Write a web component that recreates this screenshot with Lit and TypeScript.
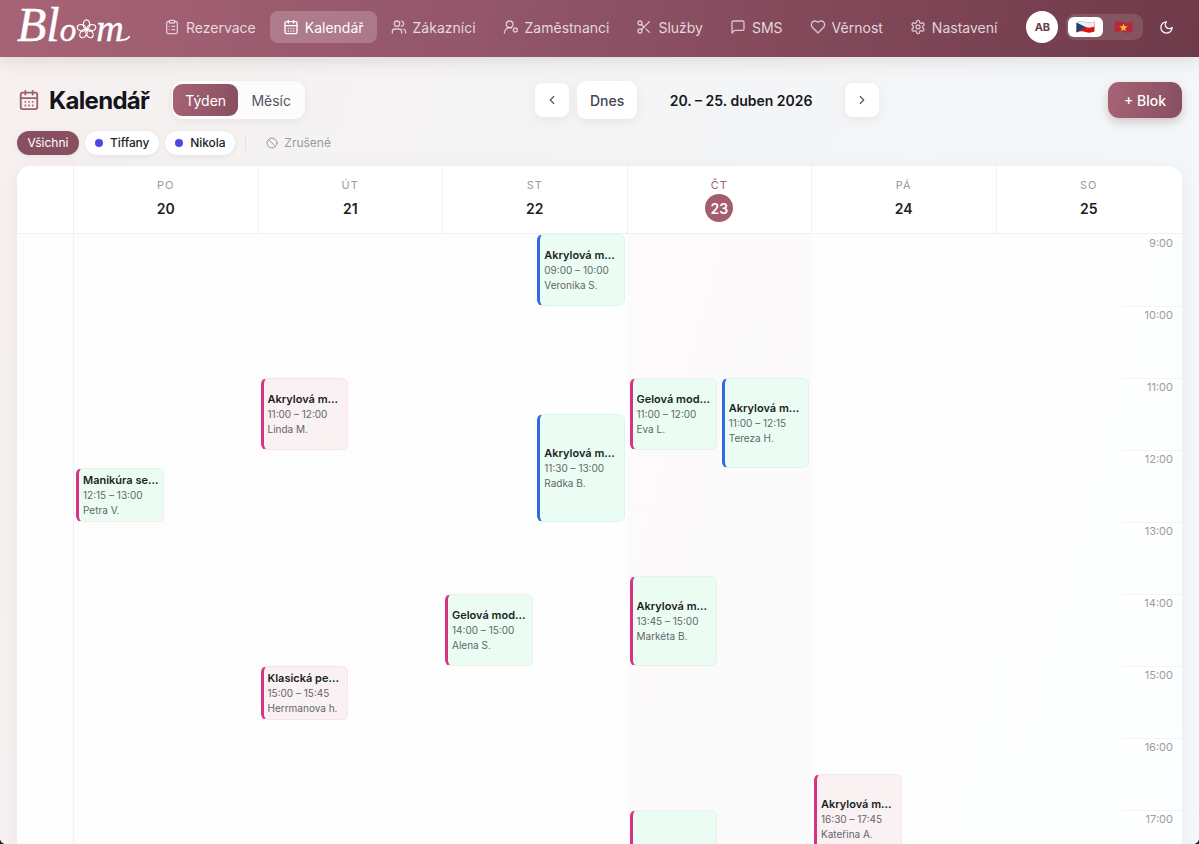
import { LitElement, html, css, svg } from "lit";
import { customElement } from "lit/decorators.js";

const I = {
  clipboard: svg`<rect x="8" y="2" width="8" height="4" rx="1"/><path d="M16 4h2a2 2 0 0 1 2 2v14a2 2 0 0 1-2 2H6a2 2 0 0 1-2-2V6a2 2 0 0 1 2-2h2"/><path d="M12 11h4M12 16h4M8 11h.01M8 16h.01"/>`,
  calendar: svg`<path d="M8 2v4M16 2v4"/><rect x="3" y="4" width="18" height="18" rx="2"/><path d="M3 10h18M8 14h.01M12 14h.01M16 14h.01M8 18h.01M12 18h.01M16 18h.01"/>`,
  users: svg`<path d="M16 21v-2a4 4 0 0 0-4-4H6a4 4 0 0 0-4 4v2"/><circle cx="9" cy="7" r="4"/><path d="M22 21v-2a4 4 0 0 0-3-3.87"/><path d="M16 3.13a4 4 0 0 1 0 7.75"/>`,
  staff: svg`<circle cx="10" cy="8" r="5"/><path d="M2 21a8 8 0 0 1 10.4-7.6"/><circle cx="18.5" cy="16.5" r="3"/>`,
  scissors: svg`<circle cx="6" cy="6" r="3"/><path d="M8.12 8.12 12 12"/><path d="M20 4 8.12 15.88"/><circle cx="6" cy="18" r="3"/><path d="M14.8 14.8 20 20"/>`,
  message: svg`<path d="M21 15a2 2 0 0 1-2 2H7l-4 4V5a2 2 0 0 1 2-2h14a2 2 0 0 1 2 2z"/>`,
  heart: svg`<path d="M19 14c1.49-1.46 3-3.21 3-5.5A5.5 5.5 0 0 0 16.5 3c-1.76 0-3 .5-4.5 2-1.5-1.5-2.74-2-4.5-2A5.5 5.5 0 0 0 2 8.5c0 2.3 1.5 4.05 3 5.5l7 7Z"/>`,
  settings: svg`<path d="M12.22 2h-.44a2 2 0 0 0-2 2v.18a2 2 0 0 1-1 1.73l-.43.25a2 2 0 0 1-2 0l-.15-.08a2 2 0 0 0-2.73.73l-.22.38a2 2 0 0 0 .73 2.73l.15.1a2 2 0 0 1 1 1.72v.51a2 2 0 0 1-1 1.74l-.15.09a2 2 0 0 0-.73 2.73l.22.38a2 2 0 0 0 2.73.73l.15-.08a2 2 0 0 1 2 0l.43.25a2 2 0 0 1 1 1.73V20a2 2 0 0 0 2 2h.44a2 2 0 0 0 2-2v-.18a2 2 0 0 1 1-1.73l.43-.25a2 2 0 0 1 2 0l.15.08a2 2 0 0 0 2.73-.73l.22-.39a2 2 0 0 0-.73-2.73l-.15-.08a2 2 0 0 1-1-1.74v-.5a2 2 0 0 1 1-1.74l.15-.09a2 2 0 0 0 .73-2.73l-.22-.38a2 2 0 0 0-2.73-.73l-.15.08a2 2 0 0 1-2 0l-.43-.25a2 2 0 0 1-1-1.73V4a2 2 0 0 0-2-2z"/><circle cx="12" cy="12" r="3"/>`,
  moon: svg`<path d="M12 3a6 6 0 0 0 9 9 9 9 0 1 1-9-9Z"/>`,
  left: svg`<path d="m15 18-6-6 6-6"/>`,
  right: svg`<path d="m9 18 6-6-6-6"/>`,
  ban: svg`<circle cx="12" cy="12" r="10"/><path d="m4.9 4.9 14.2 14.2"/>`,
};

const icon = (p: unknown, cls = "") =>
  html`<svg class="ic ${cls}" viewBox="0 0 24 24" fill="none" stroke="currentColor" stroke-width="2" stroke-linecap="round" stroke-linejoin="round">${p}</svg>`;

const NAV: [string, unknown, boolean?][] = [
  ["Rezervace", I.clipboard],
  ["Kalendář", I.calendar, true],
  ["Zákazníci", I.users],
  ["Zaměstnanci", I.staff],
  ["Služby", I.scissors],
  ["SMS", I.message],
  ["Věrnost", I.heart],
  ["Nastavení", I.settings],
];

const DAYS: [string, number][] = [["PO", 20], ["ÚT", 21], ["ST", 22], ["ČT", 23], ["PÁ", 24], ["SO", 25]];

type Ev = { day: number; lane: number; start: number; end: number; title: string; time: string; who: string; accent: "pink" | "blue"; tint: "green" | "rose" };
const m = (h: number, min = 0) => h * 60 + min;
const EVENTS: Ev[] = [
  { day: 0, lane: 0, start: m(12, 15), end: m(13), title: "Manikúra se lakováním", time: "12:15 – 13:00", who: "Petra V.", accent: "pink", tint: "green" },
  { day: 1, lane: 0, start: m(11), end: m(12), title: "Akrylová modeláž", time: "11:00 – 12:00", who: "Linda M.", accent: "pink", tint: "rose" },
  { day: 1, lane: 0, start: m(15), end: m(15, 45), title: "Klasická pedikúra", time: "15:00 – 15:45", who: "Herrmanova h.", accent: "pink", tint: "rose" },
  { day: 2, lane: 1, start: m(9), end: m(10), title: "Akrylová modeláž", time: "09:00 – 10:00", who: "Veronika S.", accent: "blue", tint: "green" },
  { day: 2, lane: 1, start: m(11, 30), end: m(13), title: "Akrylová modeláž", time: "11:30 – 13:00", who: "Radka B.", accent: "blue", tint: "green" },
  { day: 2, lane: 0, start: m(14), end: m(15), title: "Gelová modeláž", time: "14:00 – 15:00", who: "Alena S.", accent: "pink", tint: "green" },
  { day: 3, lane: 0, start: m(11), end: m(12), title: "Gelová modeláž", time: "11:00 – 12:00", who: "Eva L.", accent: "pink", tint: "green" },
  { day: 3, lane: 1, start: m(11), end: m(12, 15), title: "Akrylová modeláž", time: "11:00 – 12:15", who: "Tereza H.", accent: "blue", tint: "green" },
  { day: 3, lane: 0, start: m(13, 45), end: m(15), title: "Akrylová modeláž", time: "13:45 – 15:00", who: "Markéta B.", accent: "pink", tint: "green" },
  { day: 3, lane: 0, start: m(17), end: m(18, 30), title: "Akrylová modeláž", time: "17:00 – 18:30", who: "Jana K.", accent: "pink", tint: "green" },
  { day: 4, lane: 0, start: m(16, 30), end: m(17, 45), title: "Akrylová modeláž", time: "16:30 – 17:45", who: "Kateřina A.", accent: "pink", tint: "rose" },
];
const HOURS = [9, 10, 11, 12, 13, 14, 15, 16, 17, 18];

@customElement("app-root")
export class AppRoot extends LitElement {
  static styles = css`
    :host { display: block; height: 844px; overflow: hidden; position: relative; font-family: Inter, "Liberation Sans", sans-serif; color: #18181f;
      background: linear-gradient(105deg, #f6f0ef 0%, #f4f4f5 45%, #f3f8fa 100%); }
    * { box-sizing: border-box; }
    .ic { width: 16px; height: 16px; display: block; flex: none; }
    header { height: 57px; display: flex; align-items: center; padding: 0 0 3px 17px; position: relative; z-index: 2;
      background: linear-gradient(100deg, #a76376 0%, #93566a 40%, #6f3a49 100%); box-shadow: 0 4px 16px rgba(70,30,40,.12); }
    .logo { width: 128px; height: 44px; margin-bottom: 4px; flex: none; display: flex; align-items: baseline; color: #fff; font-family: "Liberation Serif", serif; font-style: italic; line-height: 44px; white-space: nowrap; -webkit-text-stroke: .4px #fff; }
    .logo .bl { font-size: 48px; }
    .logo .o { font-size: 33px; }
    .logo .flower { width: 21px; height: 21px; align-self: center; margin: 8px 0 0 0; flex: none; }
    .logo .mm { font-size: 38px; margin-left: -1px; }
    .logo .tail { width: 9px; height: 8px; flex: none; margin-left: -3px; }
    nav { display: flex; align-items: center; gap: 1px; margin-left: 6px; }
    .item { display: flex; align-items: center; gap: 6px; height: 32px; padding: 0 13px; border-radius: 8px; font-size: 14px; color: rgba(255,255,255,.78); white-space: nowrap; }
    .item .ic { color: rgba(255,255,255,.68); }
    .item.on { color: #fff; background: rgba(255,255,255,.2); }
    .item.on .ic { color: #fff; }
    .tools { display: flex; align-items: center; margin-left: 16px; }
    .avatar { width: 32px; height: 32px; border-radius: 50%; background: #fff; color: #6f3a49; font-size: 11px; font-weight: 700; display: flex; align-items: center; justify-content: center; }
    .langs { display: flex; gap: 3px; align-items: center; margin-left: 8px; width: 77px; height: 26px; padding: 3px 2px; border-radius: 9px; background: rgba(255,255,255,.12); }
    .lang { width: 35px; height: 20px; border-radius: 6px; display: flex; align-items: center; justify-content: center; }
    .lang.on { background: #fff; }
    .lang svg { width: 19px; height: 14px; display: block; }
    .moon { margin-left: 16px; width: 15px; height: 15px; color: #fff; }

    main { padding: 24px 17px 0; }
    .bar { display: flex; justify-content: space-between; align-items: center; height: 38px; }
    .left, .center { display: flex; align-items: center; }
    .title { display: flex; align-items: center; gap: 9px; padding-left: 1px; }
    .title .ic { width: 22px; height: 22px; color: #a05f70; }
    h1 { margin: 0; font-size: 24px; font-weight: 700; letter-spacing: -.7px; color: #14141c; }
    .tabs { display: flex; margin-left: 23px; padding: 3px 0 3px 1px; width: 133px; height: 38px; background: #fdfcfc; border-radius: 11px; box-shadow: 0 2px 8px rgba(90,50,60,.07); }
    .tab { height: 32px; display: flex; align-items: center; justify-content: center; font-size: 14px; color: #55555f; border-radius: 9px; width: 65px; }
    .tab.on { color: #fff; background: linear-gradient(100deg, #a76376, #874f60); }
    .tab + .tab { width: 66px; }
    .center { gap: 8px; margin-left: 1px; }
    .sq { width: 34px; height: 34px; background: #fff; border-radius: 8px; display: flex; align-items: center; justify-content: center; color: #55555f; box-shadow: 0 3px 10px rgba(60,60,80,.07); }
    .sq .ic { width: 14px; height: 14px; }
    .today { width: 60px; height: 38px; background: #fff; border-radius: 9px; display: flex; align-items: center; justify-content: center; font-size: 14px; font-weight: 500; color: #44444e; box-shadow: 0 3px 10px rgba(60,60,80,.07); }
    .date { width: 192px; text-align: center; font-size: 14px; font-weight: 600; color: #17171f; }
    .add { width: 74px; height: 36px; border-radius: 11px; display: flex; align-items: center; justify-content: center; font-size: 14px; font-weight: 500; color: #fff;
      background: linear-gradient(100deg, #a76376, #874f60); box-shadow: 0 4px 10px rgba(135,79,96,.3); }
    .filters { display: flex; align-items: center; height: 24px; margin-top: 12px; font-size: 12px; line-height: 22px; }
    .chip { height: 24px; border-radius: 12px; display: flex; align-items: center; background: #fff; color: #24242c; font-weight: 500; letter-spacing: -.1px; padding: 0 10px; gap: 7px; margin-right: 6px; box-shadow: 0 1px 4px rgba(60,60,80,.1); }
    .chip.on { background: #874f60; color: #fff; width: 62px; justify-content: center; padding: 0; font-weight: 400; letter-spacing: 0; }
    .dot { width: 8px; height: 8px; border-radius: 50%; background: #4f46e5; }
    .sep { width: 1px; height: 16px; background: #e2e0e2; margin: 0 20px 0 4px; }
    .off { display: flex; align-items: center; gap: 6px; color: #9a9aa3; }
    .off .ic { width: 12px; height: 12px; }

    .card { margin-top: 11px; width: 1165px; height: 700px; background: rgba(255,255,255,.84); border-radius: 14px 14px 0 0; overflow: hidden; position: relative; box-shadow: 0 4px 18px rgba(60,50,70,.06); }
    .grid { display: grid; grid-template-columns: 57px repeat(6, 184.5px); }
    .head { height: 68px; background: #fff; border-bottom: 1px solid #f0eff1; }
    .cell { border-right: 1px solid #f0eff1; display: flex; flex-direction: column; align-items: center; padding-top: 13px; }
    .cell:last-child { border-right: 0; }
    .cell .wd { font-size: 11px; letter-spacing: 1px; line-height: 13px; color: #9a9aa0; }
    .cell .num { margin-top: 2px; width: 28px; height: 28px; border-radius: 50%; display: flex; align-items: center; justify-content: center; font-size: 14px; font-weight: 600; color: #1e1e26; }
    .cell.now .wd { color: #a35d6f; }
    .cell.now .num { background: #a35d6f; color: #fff; }
    .body { height: 632px; position: relative; }
    .gut { border-right: 1px solid #f0eff2; height: 632px; }
    .col { position: relative; height: 632px; }
    .col.now { background: rgba(150,90,110,.025); }
    .rail { position: absolute; top: 0; right: 0; width: 60px; }
    .hour { height: 72px; border-top: 1px solid #f4f3f5; padding: 1px 9px 0 0; text-align: right; font-size: 11px; line-height: 15px; color: #9a9ba3; }
    .hour:first-child { border-top-color: transparent; }
    .ev { position: absolute; border-radius: 6px; border: 1px solid; border-left-width: 3px; display: flex; flex-direction: column; justify-content: center; padding: 0 3px 0 4px; font-size: 10px; line-height: 15.5px; color: #62666c; overflow: hidden; }
    .ev b { font-size: 11px; font-weight: 600; color: #1a1f24; white-space: nowrap; overflow: hidden; text-overflow: ellipsis; line-height: 16px; }
    .ev span { white-space: nowrap; }
    .ev.pink { border-color: rgba(214,51,132,.06); border-left-color: #d63384; }
    .ev.blue { border-color: rgba(47,106,224,.06); border-left-color: #2f6ae0; }
    .ev.green { background: #ebfdf3; }
    .ev.rose { background: #f9f1f2; }
    .corner { position: absolute; bottom: 0; width: 5px; height: 5px; }
    .corner.l { left: 0; background: radial-gradient(circle at 100% 0, transparent 4.5px, #222 5px); }
    .corner.r { right: 0; background: radial-gradient(circle at 0 0, transparent 4.5px, #222 5px); }
  `;

  private pos(e: Ev) {
    const top = ((e.start - m(9)) / 60) * 72;
    const h = ((e.end - e.start) / 60) * 72;
    return `top:${top}px;height:${h}px;left:calc(${e.lane * 50}% + 2px);width:calc(50% - 4.75px)`;
  }

  render() {
    return html`
      <header>
        <div class="logo" role="img" aria-label="Bloom">
          <span class="bl">Bl</span><span class="o">o</span>
          <svg class="flower" viewBox="0 0 24 24" fill="none" stroke="#fff" stroke-width="1.4">
            ${[0, 72, 144, 216, 288].map((a) => svg`<ellipse cx="12" cy="6.2" rx="3.6" ry="5.2" transform="rotate(${a} 12 12)"/>`)}
            <circle cx="12" cy="12" r="1.2" fill="#fff"/>
          </svg>
          <span class="mm">m</span>
          <svg class="tail" viewBox="0 0 9 8" fill="none" stroke="#fff" stroke-width="1.6" stroke-linecap="round"><path d="M0 6.5C3 7.5 6 6.5 8.5 3.5"/></svg>
        </div>
        <nav>
          ${NAV.map(([t, p, on]) => html`<div class="item ${on ? "on" : ""}">${icon(p)}<span>${t}</span></div>`)}
        </nav>
        <div class="tools">
          <div class="avatar">AB</div>
          <div class="langs">
            <div class="lang on">
              <svg viewBox="0 0 38 28"><path d="M1 5 Q10 1 19 4 T37 3 V23 Q28 27 19 24 T1 25Z" fill="#d7141a"/><path d="M1 5 Q10 1 19 4 T37 3 V13 Q28 17 19 14 T1 15Z" fill="#eee"/><path d="M1 5 L19 14 L1 25Z" fill="#11457e"/></svg>
            </div>
            <div class="lang">
              <svg viewBox="0 0 38 28"><path d="M1 5 Q10 1 19 4 T37 3 V23 Q28 27 19 24 T1 25Z" fill="#b9273a"/><path d="M19 7.5l2 6.2h6.5l-5.3 3.8 2 6.2-5.2-3.8-5.2 3.8 2-6.2-5.3-3.8H17z" fill="#f0c33c" transform="translate(0 -1)"/></svg>
            </div>
          </div>
          ${icon(I.moon, "moon")}
        </div>
      </header>
      <main>
        <div class="bar">
          <div class="left">
            <div class="title">${icon(I.calendar)}<h1>Kalendář</h1></div>
            <div class="tabs"><div class="tab on">Týden</div><div class="tab">Měsíc</div></div>
          </div>
          <div class="center">
            <div class="sq">${icon(I.left)}</div>
            <div class="today">Dnes</div>
            <div class="date">20. – 25. duben 2026</div>
            <div class="sq">${icon(I.right)}</div>
          </div>
          <div class="add">+ Blok</div>
        </div>
        <div class="filters">
          <div class="chip on">Všichni</div>
          <div class="chip"><i class="dot"></i>Tiffany</div>
          <div class="chip"><i class="dot"></i>Nikola</div>
          <div class="sep"></div>
          <div class="off">${icon(I.ban)}<span>Zrušené</span></div>
        </div>
        <section class="card">
          <div class="grid head">
            <div class="cell"></div>
            ${DAYS.map(([d, n]) => html`<div class="cell ${n === 23 ? "now" : ""}"><span class="wd">${d}</span><span class="num">${n}</span></div>`)}
          </div>
          <div class="grid body">
            <div class="gut"></div>
            ${DAYS.map((_, i) => html`<div class="col ${i === 3 ? "now" : ""}">
              ${EVENTS.filter((e) => e.day === i).map((e) => html`<div class="ev ${e.accent} ${e.tint}" style=${this.pos(e)}><b>${e.title}</b><span>${e.time}</span><span>${e.who}</span></div>`)}
            </div>`)}
            <div class="rail">${HOURS.map((h) => html`<div class="hour">${h}:00</div>`)}</div>
          </div>
        </section>
      </main>
      <div class="corner l"></div><div class="corner r"></div>
    `;
  }
}
